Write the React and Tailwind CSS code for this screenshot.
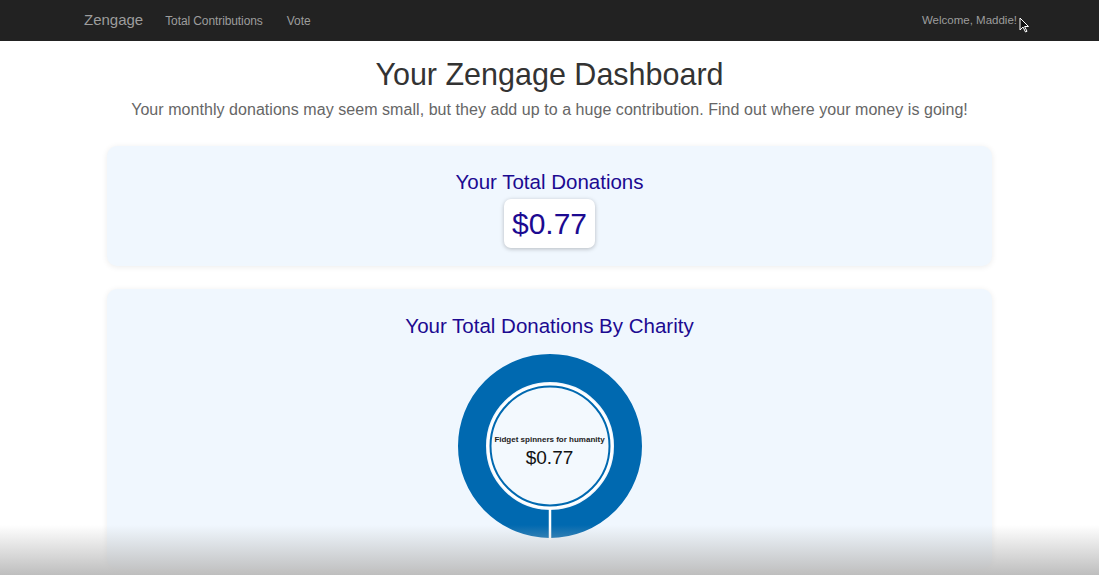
import React from "react";

function Donut() {
  return (
    <svg width="200" height="200" viewBox="0 0 200 200">
      <circle cx="100" cy="100" r="78" fill="none" stroke="#0069b0" strokeWidth="28" />
      <line x1="100" y1="162" x2="100" y2="194" stroke="#ffffff" strokeWidth="2.5" />
      <circle cx="100" cy="100" r="63" fill="#ffffff" />
      <circle cx="100" cy="100" r="59.5" fill="#f3f9fe" stroke="#0069b0" strokeWidth="2" />
    </svg>
  );
}

export default function App() {
  return (
    <div className="relative w-[1099px] h-[575px] overflow-hidden bg-white font-['Liberation_Sans',Arial,sans-serif]">
      {/* Navbar */}
      <nav className="h-[41px] bg-[#222222] flex items-center pl-[84px] pr-[82px]">
        <span className="text-[#9d9d9d] text-[15px] mr-[22px]">Zengage</span>
        <span className="text-[#9d9d9d] text-[12px] tracking-[-0.1px] mr-[24px]">Total Contributions</span>
        <span className="text-[#9d9d9d] text-[12px]">Vote</span>
        <span className="ml-auto text-[#9d9d9d] text-[11.5px]">Welcome, Maddie!</span>
      </nav>

      {/* cursor */}
      <svg className="absolute left-[1019px] top-[17px]" width="11" height="16" viewBox="0 0 11 16">
        <path d="M1 1 L1 13 L4 10 L6.5 15 L8 14.3 L5.6 9.5 L9.5 9.5 Z" fill="#111" stroke="#fff" strokeWidth="1" />
      </svg>

      <div className="flex flex-col items-center">
        <h1 className="mt-[15px] text-[30.5px] leading-[36px] text-[#333333]">Your Zengage Dashboard</h1>
        <p className="mt-[6px] text-[16px] leading-[24px] text-[#666666] tracking-[0.05px]">
          Your monthly donations may seem small, but they add up to a huge contribution. Find out where your money is going!
        </p>

        <div className="mt-[24px] w-[885px] h-[120px] rounded-[10px] bg-[#f0f7fe] shadow-[0_1px_6px_rgba(0,0,0,0.08)] flex flex-col items-center">
          <div className="mt-[25px] text-[20.5px] leading-[22px] text-[#1c0a91]">Your Total Donations</div>
          <div className="mt-[6px] w-[91px] h-[49px] rounded-[7px] bg-white shadow-[0_1px_4px_rgba(0,0,0,0.25)] flex items-center justify-center text-[30px] text-[#1c0a91]">
            $0.77
          </div>
        </div>

        <div className="mt-[23px] w-[885px] h-[280px] rounded-[10px] bg-[#f0f7fe] shadow-[0_1px_6px_rgba(0,0,0,0.08)] flex flex-col items-center">
          <div className="mt-[26px] text-[20.5px] leading-[22px] text-[#1c0a91]">Your Total Donations By Charity</div>
          <div className="relative mt-[9px]">
            <Donut />
            <div className="absolute inset-0 flex flex-col items-center justify-center pt-[12px]">
              <div className="text-[8px] font-bold text-[#222]">Fidget spinners for humanity</div>
              <div className="text-[19px] leading-[24px] text-[#111]">$0.77</div>
            </div>
          </div>
        </div>
      </div>

      {/* video fade */}
      <div className="absolute left-0 right-0 bottom-0 h-[50px] bg-gradient-to-b from-[rgba(190,190,190,0)] to-[rgba(190,190,190,1)] pointer-events-none" />
    </div>
  );
}
